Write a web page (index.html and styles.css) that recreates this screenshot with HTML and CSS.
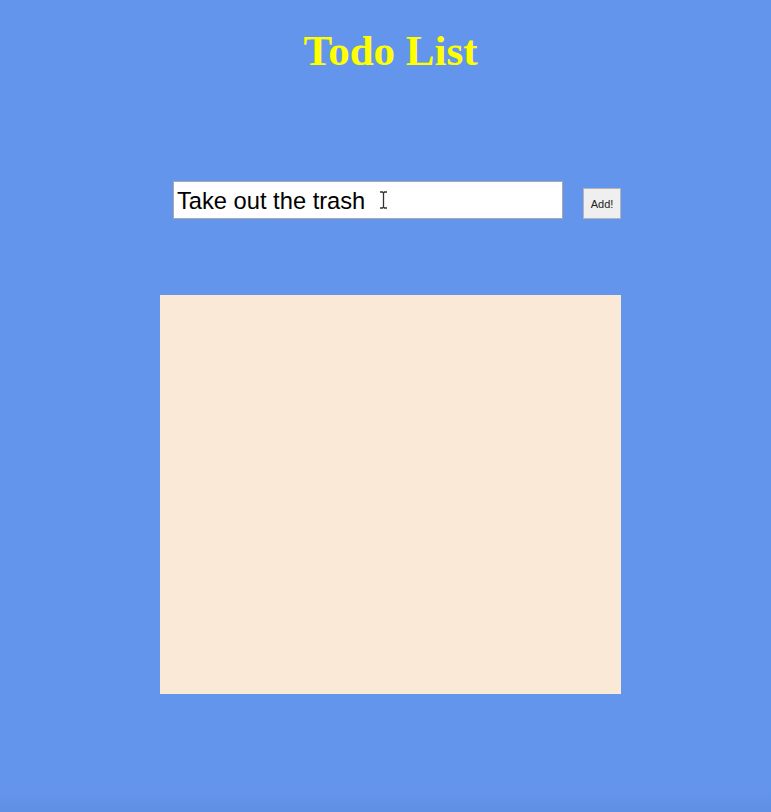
FILE: index.html
```html
<!DOCTYPE html>
<html>
<head>
<meta charset="utf-8">
<title>Todo List</title>
<link rel="stylesheet" href="styles.css">
</head>
<body>
<main class="app">
  <h1 class="title">Todo List</h1>
  <form class="todo-form">
    <div class="field">
      <input class="todo-input" type="text" value="Take out the trash">
      <svg class="ibeam" width="9" height="18" viewBox="0 0 9 18"><path d="M1 1h2.5l1 1 1-1H8M1 17h2.5l1-1 1 1H8M4.5 2v14" fill="none" stroke="#333" stroke-width="1.3"/></svg>
    </div>
    <button class="add-btn" type="button">Add!</button>
  </form>
  <section class="todo-list"></section>
</main>
</body>
</html>
```
FILE: styles.css
```css
html, body {
  margin: 0;
  padding: 0;
}
body {
  background: linear-gradient(to bottom, #6495ed 0, #6495ed 790px, #5f8fe4 812px);
  min-height: 812px;
  font-family: "Liberation Sans", Arial, sans-serif;
}
.app {
  width: 461px;
  margin-left: 160px;
  display: flex;
  flex-direction: column;
}
.title {
  margin: 25px 0 0 0;
  text-align: center;
  font-family: "Liberation Serif", "Times New Roman", serif;
  font-weight: bold;
  font-size: 43px;
  line-height: 51px;
  color: #ffff00;
}
.todo-form {
  display: flex;
  align-items: flex-end;
  gap: 20px;
  padding-left: 13px;
  margin-top: 105px;
}
.field {
  position: relative;
}
.todo-input {
  box-sizing: border-box;
  width: 390px;
  height: 38px;
  border: 1px solid #a9a9a9;
  padding: 2px 3px 0 3px;
  font-family: "Liberation Sans", Arial, sans-serif;
  font-size: 23.7px;
  color: #000;
  background: #fff;
  outline: none;
  display: block;
}
.ibeam {
  position: absolute;
  left: 206px;
  top: 10px;
}
.add-btn {
  box-sizing: border-box;
  width: 40px;
  height: 31px;
  padding: 0;
  border: 1px solid #b4b4b4;
  background: #efefef;
  font-family: "Liberation Sans", Arial, sans-serif;
  font-size: 11px;
  color: #222;
}
.todo-list {
  margin-top: 76px;
  height: 399px;
  background: #fae9d6;
}
```
